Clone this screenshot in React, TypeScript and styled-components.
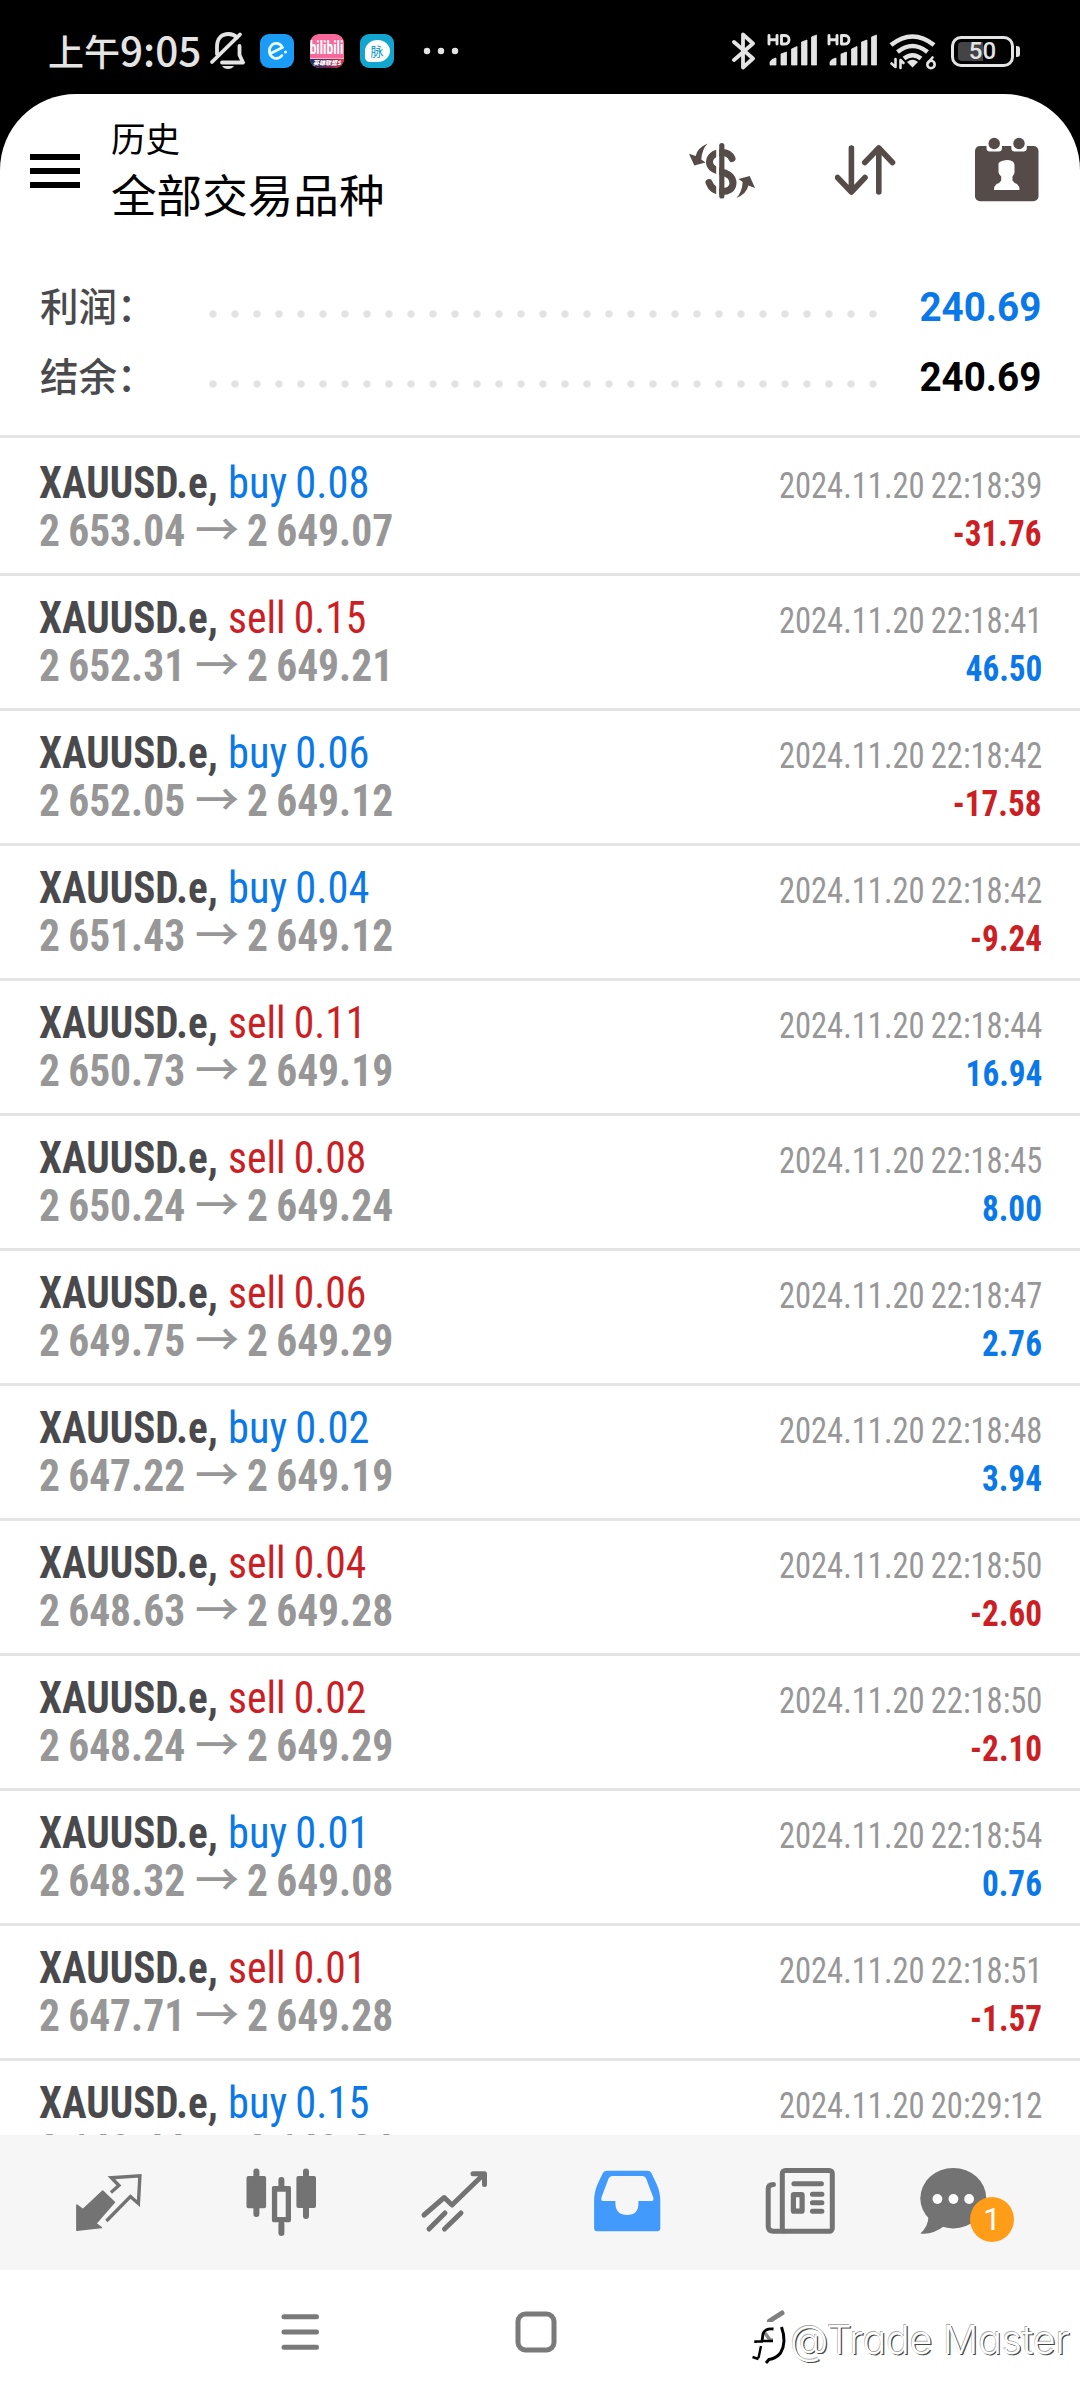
import React from "react";
import styled, { createGlobalStyle } from "styled-components";

const BLUE = "#0a78e8";
const RED = "#cc1f25";
const CJK = `"Noto Sans CJK SC", sans-serif`;
const LATIN = `Roboto, "Noto Sans CJK SC", sans-serif`;

const GlobalStyle = createGlobalStyle`
  html, body { margin: 0; padding: 0; background: #000; }
  * { box-sizing: border-box; }
  svg { display: block; flex: none; }
`;

const Screen = styled.div`
  position: relative;
  display: flex;
  flex-direction: column;
  width: 1080px;
  height: 2400px;
  overflow: hidden;
  background: #000;
  font-family: ${LATIN};
`;

/* ---------- status bar ---------- */

const StatusBar = styled.header`
  display: flex;
  align-items: center;
  height: 94px;
  padding: 8px 60px 0 48px;
  color: #e4e4e4;
`;

const Clock = styled.div`
  display: flex;
  align-items: baseline;
  width: 161px;
  margin-top: -4px;
  font: 500 36px/60px ${CJK};
  white-space: nowrap;
`;

const Digits = styled.span`
  font-size: 40.5px;
`;

const AppBadges = styled.div`
  display: flex;
  gap: 16px;
  margin-left: 15px;
`;

const AppBadge = styled.div<{ $bg: string }>`
  display: flex;
  flex-direction: column;
  align-items: center;
  justify-content: center;
  width: 34px;
  height: 34px;
  border-radius: 9px;
  overflow: hidden;
  background: ${(p) => p.$bg};
`;

const BiliText = styled.div`
  height: 24px;
  color: #fff;
  font: 700 18px/27px Roboto, sans-serif;
  font-stretch: 75%;
  transform: scaleX(0.75);
`;

const BiliStrip = styled.div`
  width: 34px;
  height: 10px;
  border-top: 1px solid #f7b5c8;
  background: linear-gradient(90deg, #1b2e66, #7d2450 60%, #d8324a);
  color: #fff;
  font: italic 900 6px/8px ${CJK};
  text-align: center;
  white-space: nowrap;
`;

const MaiBubble = styled.div`
  display: flex;
  align-items: center;
  justify-content: center;
  width: 25px;
  height: 22px;
  border-radius: 50% 50% 50% 20%;
  background: #fff;
  color: #159cc4;
  font: 400 13px/20px ${CJK};
`;

const MoreDots = styled.svg`
  margin-left: 29px;
`;

const StatusRight = styled.div`
  display: flex;
  align-items: center;
  margin-left: auto;
`;

const Signals = styled.div`
  display: flex;
  gap: 10px;
  margin: 0 12px 0 11px;
`;

/* ---------- app page ---------- */

const Page = styled.main`
  display: flex;
  flex-direction: column;
  height: 2306px;
  border-radius: 76px 76px 0 0;
  overflow: hidden;
  background: #fff;
`;

const TopBar = styled.div`
  display: flex;
  align-items: center;
  height: 154px;
  padding: 0 41px 0 30px;
`;

const Hamburger = styled.div`
  display: flex;
  flex-direction: column;
  gap: 8px;
  width: 50px;
  height: 34px;
  i { height: 6px; background: #000; }
`;

const Titles = styled.div`
  display: flex;
  flex-direction: column;
  margin: -6px auto 0 31px;
  color: #000;
  font-family: ${CJK};
`;

const Caption = styled.div`
  font-size: 34.5px;
  line-height: 50px;
`;

const Title = styled.div`
  font-size: 45.6px;
  line-height: 62px;
`;

const Actions = styled.div`
  display: flex;
  align-items: center;
  gap: 78px;
  padding-bottom: 3px;
  color: #554b48;
`;

const Summary = styled.section`
  height: 190px;
  margin-bottom: 3px;
  padding: 22px 39px 0 40px;
  border-bottom: 3px solid #e4e4e4;
`;

const SummaryRow = styled.div`
  display: flex;
  align-items: center;
  height: 70px;
`;

const SummaryLabel = styled.div`
  width: 163px;
  margin-top: -2px;
  color: #4a4a4d;
  font: 500 38.5px/70px ${CJK};
  white-space: nowrap;
`;

const Leader = styled.div`
  width: 682px;
  height: 8px;
  margin-top: 18px;
  background: radial-gradient(circle, #e2e2e2 3.2px, transparent 4.2px) -1px 0 / 22px 8px repeat-x;
`;

const SummaryValue = styled.div<{ $color: string }>`
  margin: 5px 0 0 auto;
  color: ${(p) => p.$color};
  font-size: 40px;
  font-weight: 700;
  transform: scaleX(0.965);
  transform-origin: right;
`;

const List = styled.section`
  height: 1694px;
  overflow: hidden;
`;

const Row = styled.div`
  height: 135px;
  padding: 19px 38px 0 39px;
  border-bottom: 3px solid #e4e4e4;
`;

const Line = styled.div`
  display: flex;
  align-items: baseline;
  height: 47px;
  line-height: 48px;
  white-space: nowrap;
`;

const Condensed = styled.span<{
  $size: number;
  $color: string;
  $scale: number;
  $bold?: boolean;
  $width?: number;
}>`
  display: block;
  width: ${(p) => (p.$width ? `${p.$width}px` : "auto")};
  margin-left: ${(p) => (p.$width ? "0" : "auto")};
  color: ${(p) => p.$color};
  font-size: ${(p) => p.$size}px;
  font-weight: ${(p) => (p.$bold ? 700 : 400)};
  font-stretch: 75%;
  word-spacing: -1.5px;
  transform: scaleX(${(p) => p.$scale});
  transform-origin: ${(p) => (p.$width ? "left" : "right")};
`;

const Arrow = styled.span`
  width: 52px;
  color: #979797;
  font: 500 44px/40px ${CJK};
`;

/* ---------- bottom bars ---------- */

const TabBar = styled.nav`
  display: grid;
  grid-template-columns: repeat(6, 173.2px);
  height: 135px;
  padding-left: 21px;
  background: #f6f6f6;
  color: #737373;
`;

const Tab = styled.div<{ $active?: boolean }>`
  position: relative;
  display: flex;
  align-items: center;
  justify-content: center;
  color: ${(p) => (p.$active ? "#429bfc" : "inherit")};
`;

const Count = styled.span`
  position: absolute;
  left: 83px;
  top: 62px;
  width: 44px;
  height: 45px;
  border-radius: 50%;
  background: #ff9c18;
  color: #fff;
  font-size: 32px;
  line-height: 45px;
  text-align: center;
`;

const SystemBar = styled.nav`
  display: grid;
  grid-template-columns: repeat(3, 235.7px);
  align-items: center;
  justify-items: center;
  height: 130px;
  padding: 0 0 6px 182px;
  color: #7a7a7a;
`;

const Watermark = styled.div`
  position: absolute;
  left: 750px;
  top: 2308px;
  display: flex;
  align-items: center;
  height: 64px;
  color: #fff;
  white-space: nowrap;
`;

const WatermarkText = styled.span`
  font: 300 39.5px/60px Inter, sans-serif;
  font-feature-settings: "cv11";
  letter-spacing: -0.3px;
  text-shadow: 1.2px 1.2px 0.5px #444, -0.6px -0.6px 0.5px #aaa;
`;

/* ---------- icons ---------- */

const stroke = (width: number) => ({
  fill: "none",
  stroke: "currentColor",
  strokeWidth: width,
  strokeLinecap: "round" as const,
  strokeLinejoin: "round" as const,
});

const Muted = () => (
  <svg width="36" height="40" viewBox="209 32 36 40">
    <g {...stroke(3.8)}>
      <path d="M217 55V48C217 39 222 35 228.500 35C232 35 235 36.500 237 38.500" />
      <path d="M239.500 47V56L243 63.500H222" />
      <path d="M212 63L240 35.500" />
    </g>
    <path d="M222 67H234Q232 70 228 70T222 67Z" fill="currentColor" />
  </svg>
);

const SignalBars = () => (
  <svg width="50" height="36" viewBox="0 0 50 36">
    <g {...stroke(2.9)}>
      <path d="M2 2.500V11M10 2.500V11M2 6.700H10" />
      <path d="M14.500 2.500V11H17Q22 11 22 6.700T17 2.500Z" />
    </g>
    <path
      d="M3 32V29Q4 26 9 25V32ZM14 32V21L19.500 19V32ZM24.500 32V16L30 13.500V32ZM34.500 32V9L40 7V32ZM44.500 32V4L49.500 2V32Z"
      fill="currentColor"
      stroke="currentColor"
      strokeWidth="0.8"
      strokeLinejoin="round"
    />
  </svg>
);

const Bluetooth = () => (
  <svg width="24" height="40" viewBox="732 31 24 40">
    <path {...stroke(3.8)} d="M734 42L753 58.500L743 67.500V34.500L753 43.500L734 60" />
  </svg>
);

const Wifi = () => (
  <svg width="48" height="38" viewBox="889 33 48 38">
    <g {...stroke(4.6)} strokeLinecap="butt">
      <path d="M891 46Q912.500 29 934 46" />
      <path d="M897.500 53Q912.500 41 927.500 53" />
      <path d="M904 59.500Q912.500 53 921 59.500" />
    </g>
    <path d="M907 63Q912.500 58.500 918 63L912.500 68.500Z" fill="currentColor" />
    <g {...stroke(2.6)}>
      <path d="M895.500 60V68L891.500 64.500M900.500 69V61L903.500 64" />
      <path d="M932.500 58.500L928 64" />
      <circle cx="931" cy="65.500" r="3.700" />
    </g>
  </svg>
);

const BatteryBox = styled.div`
  display: flex;
  align-items: center;
  gap: 2px;
  margin-left: 14px;
`;

const BatteryBody = styled.div`
  width: 63px;
  height: 31px;
  padding: 3px 4px;
  border: 3.5px solid #e4e4e4;
  border-radius: 10px;
`;

const BatteryFill = styled.div`
  width: 100%;
  height: 100%;
  border-radius: 4px;
  background: linear-gradient(90deg, #444 50%, transparent 50%);
  font: 500 24px/19px Roboto, sans-serif;
  text-align: center;
`;

const BatteryTip = styled.div`
  width: 4px;
  height: 11px;
  border-radius: 0 3px 3px 0;
  background: #e4e4e4;
`;

const SWING =
  "M707.700 143.500Q697 148 695.700 156L689 153.700L694.300 165.500L705.500 162.500L701.300 159.500Q702 149 707.700 143.500Z";

const Currency = () => (
  <svg width="70" height="60" viewBox="687 140 70 60">
    <path
      {...stroke(7)}
      d="M732 158.500C730 154 726 152.500 722 152.500C714 152.500 709.500 157 709.500 162C709.500 168 715 170 722 172C729 174 733 177 733 183C733 189 728 191.500 722 191.500C715 191.500 711 188 709 182.500"
    />
    <path d="M717.700 142V200" stroke="#fff" strokeWidth="3" />
    <path {...stroke(5.200)} d="M721.800 145.500V196" />
    <path d={SWING} fill="currentColor" />
    <path d={SWING} fill="currentColor" transform="rotate(180 722 170.800)" />
  </svg>
);

const Sort = () => (
  <svg width="62" height="56" viewBox="835 143 62 56">
    <path
      {...stroke(5.600)}
      d="M851.400 149V193M837.500 178.500L851.400 193L865 178.500M878.800 193V149M864.800 163.500L878.800 149L892.500 163.500"
    />
  </svg>
);

const CalendarUser = () => (
  <svg width="64" height="66" viewBox="975 137 64 66">
    <rect x="975" y="146" width="63.500" height="55.300" rx="5" fill="currentColor" />
    <path d="M986.500 140H1002V148Q1002 151.500 998.500 151.500H990Q986.500 151.500 986.500 148ZM1011.300 140H1026.800V148Q1026.800 151.500 1023.300 151.500H1014.800Q1011.300 151.500 1011.300 148Z" fill="#fff" />
    <circle cx="994.200" cy="143.500" r="5.700" fill="currentColor" />
    <circle cx="1019" cy="143.500" r="5.700" fill="currentColor" />
    <path
      d="M998.500 163Q1001 160.500 1006.500 160Q1014 160 1014.500 165V171Q1015 174 1012.500 176.500V180.500Q1014 183 1017 184Q1019.500 186 1019.500 190H994Q994 186 996.500 184Q1000 183 1001.200 180.500V176.500Q998 174 998.500 171Z"
      fill="#fff"
    />
  </svg>
);

const TabIcon = ({ cx, children }: { cx: number; children: React.ReactNode }) => (
  <svg width="110" height="85" viewBox={`${cx - 55} 2160 110 85`}>
    {children}
  </svg>
);

const QuotesIcon = () => (
  <TabIcon cx={107.6}>
    <path
      d="M76.500 2205L82.600 2209.500L102.300 2191L114 2202.300L95.500 2223.500L101 2227.500L76.500 2230.300Z"
      fill="currentColor"
      stroke="currentColor"
      strokeWidth="1.500"
      strokeLinejoin="round"
    />
    <path
      {...stroke(3.400)}
      strokeLinecap="butt"
      strokeLinejoin="miter"
      d="M110.500 2192.500L118.500 2185.500L111 2177.800L139.500 2175.800L138 2203.500L130 2196.500L106 2221"
    />
  </TabIcon>
);

const CandlesIcon = () => (
  <TabIcon cx={280.8}>
    <g fill="currentColor">
      <rect x="246.300" y="2176" width="19.600" height="32.300" rx="2" />
      <rect x="296.200" y="2176" width="19.600" height="32" rx="2" />
      <path fillRule="evenodd" d="M273.500 2186H289Q290.800 2186 290.800 2188V2220.300Q290.800 2222.300 289 2222.300H273.500Q271.700 2222.300 271.700 2220.300V2188Q271.700 2186 273.500 2186ZM277 2191.700V2217H285.500V2191.700Z" />
    </g>
    <path {...stroke(6)} d="M256.200 2171.500V2214M305.800 2171.500V2216M281.200 2180V2186M281.200 2224V2233" />
  </TabIcon>
);

const ChartIcon = () => (
  <TabIcon cx={454}>
    <path
      {...stroke(5)}
      d="M424 2215L444.200 2197.500L452 2205L484 2174M473 2173.800H484.500V2184.500M445 2213L429 2229M461 2213L444.500 2229"
    />
  </TabIcon>
);

const InboxIcon = () => (
  <TabIcon cx={627.4}>
    <path
      fillRule="evenodd"
      fill="currentColor"
      d="M607.500 2170.700H647.500Q650.500 2170.700 651.800 2173L657 2184Q660.700 2192 660.700 2201V2228Q660.700 2231.300 657.500 2231.300H597.500Q594.500 2231.300 594.500 2228V2201Q594.500 2192 598 2184L603.300 2173Q604.500 2170.700 607.500 2170.700ZM612.500 2176Q610 2176 609 2178.500L602 2197Q600.800 2201 603.500 2201H615.800V2204Q616.500 2215 627.500 2215Q638.500 2215 638.800 2204V2201H652Q654.800 2201 653.500 2197L646.500 2178.500Q645.500 2176 643 2176Z"
    />
  </TabIcon>
);

const NewsIcon = () => (
  <TabIcon cx={800.6}>
    <rect {...stroke(5)} x="782.900" y="2170.500" width="50" height="60.800" rx="3" />
    <path {...stroke(5)} d="M774 2184.500Q768.800 2184.500 768.800 2189V2226Q768.800 2231.300 774 2231.300H784" />
    <path {...stroke(5)} d="M794.500 2183.700H822M813 2194.300H822.500M813 2202.800H822.500M813 2211.200H822.500" />
    <rect {...stroke(5.200)} x="794" y="2194.600" width="8.700" height="16.600" rx="0.500" />
  </TabIcon>
);

const ChatIcon = () => (
  <TabIcon cx={973.6}>
    <g fill="currentColor">
      <ellipse cx="952.900" cy="2198.200" rx="33" ry="30.200" />
      <path d="M928 2217Q928 2226 920 2233.500Q932 2235 944 2226L950 2215Z" />
    </g>
    <g fill="#fff">
      <circle cx="937" cy="2199" r="4.900" />
      <circle cx="953" cy="2199" r="4.900" />
      <circle cx="968.700" cy="2199" r="4.900" />
    </g>
  </TabIcon>
);

const WatermarkMark = () => (
  <svg width="40" height="64" viewBox="750 2308 40 64">
    <path d="M769.500 2321L782 2313" stroke="#808080" strokeWidth="5" strokeLinecap="round" />
    <path d="M762 2322H784L780 2326H762Z" fill="#fff" />
    <path d="M765 2333L770 2340H773" fill="none" stroke="#8b8b8b" strokeWidth="3.500" />
    <g fill="none" stroke="#000">
      <path d="M773.500 2329Q765 2328 763 2334L762 2341" strokeWidth="2.800" />
      <path d="M755.500 2343V2341.500H763M762.500 2341H773" strokeWidth="2.400" />
      <path d="M761 2346L758.500 2358M752.500 2357L758.500 2359" strokeWidth="2.400" />
      <path d="M781.500 2327Q787 2342 780.500 2353Q776 2358.500 769 2359.500L766 2363" strokeWidth="3" />
    </g>
  </svg>
);

/* ---------- data ---------- */

type Deal = {
  side: "buy" | "sell";
  lots: string;
  open: string;
  close: string;
  time: string;
  profit: string;
};

const deal = (
  side: Deal["side"],
  lots: string,
  open: string,
  close: string,
  time: string,
  profit: string
): Deal => ({ side, lots, open, close, time: `2024.11.20 ${time}`, profit });

const deals: Deal[] = [
  deal("buy", "0.08", "2 653.04", "2 649.07", "22:18:39", "-31.76"),
  deal("sell", "0.15", "2 652.31", "2 649.21", "22:18:41", "46.50"),
  deal("buy", "0.06", "2 652.05", "2 649.12", "22:18:42", "-17.58"),
  deal("buy", "0.04", "2 651.43", "2 649.12", "22:18:42", "-9.24"),
  deal("sell", "0.11", "2 650.73", "2 649.19", "22:18:44", "16.94"),
  deal("sell", "0.08", "2 650.24", "2 649.24", "22:18:45", "8.00"),
  deal("sell", "0.06", "2 649.75", "2 649.29", "22:18:47", "2.76"),
  deal("buy", "0.02", "2 647.22", "2 649.19", "22:18:48", "3.94"),
  deal("sell", "0.04", "2 648.63", "2 649.28", "22:18:50", "-2.60"),
  deal("sell", "0.02", "2 648.24", "2 649.29", "22:18:50", "-2.10"),
  deal("buy", "0.01", "2 648.32", "2 649.08", "22:18:54", "0.76"),
  deal("sell", "0.01", "2 647.71", "2 649.28", "22:18:51", "-1.57"),
  deal("buy", "0.15", "2 648.44", "2 648.24", "20:29:12", ""),
];

const DealRow = ({ d }: { d: Deal }) => (
  <Row>
    <Line>
      <Condensed $size={43.5} $color="#4a4a4d" $scale={0.945} $width={189} $bold>
        XAUUSD.e,
      </Condensed>
      <Condensed
        $size={43.5}
        $color={d.side === "buy" ? BLUE : RED}
        $scale={d.side === "buy" ? 0.975 : 0.957}
        $width={160}
      >
        {d.side} {d.lots}
      </Condensed>
      <Condensed $size={36.5} $color="#979797" $scale={0.892}>
        {d.time}
      </Condensed>
    </Line>
    <Line>
      <Condensed $size={43.5} $color="#979797" $scale={0.955} $width={156} $bold>
        {d.open}
      </Condensed>
      <Arrow>→</Arrow>
      <Condensed $size={43.5} $color="#979797" $scale={0.955} $width={155} $bold>
        {d.close}
      </Condensed>
      <Condensed $size={36.5} $color={d.profit.startsWith("-") ? RED : BLUE} $scale={0.91} $bold>
        {d.profit}
      </Condensed>
    </Line>
  </Row>
);

export default function App() {
  return (
    <Screen>
      <GlobalStyle />
      <StatusBar>
        <Clock>
          上午<Digits>9:05</Digits>
        </Clock>
        <Muted />
        <AppBadges>
          <AppBadge $bg="#1a9bf5">
            <svg width="24" height="24" viewBox="0 0 24 24">
              <path
                d="M5.500 14.500L17.500 8.500C15 3.500 9 3 6 7C3 11 4 17 9 19C12 20 15 19 17 16.500"
                fill="none"
                stroke="#e8ffff"
                strokeWidth="2.700"
                strokeLinecap="round"
              />
              <circle cx="20.500" cy="13" r="1.500" fill="#e8ffff" />
            </svg>
          </AppBadge>
          <AppBadge $bg="#f8689a">
            <BiliText>bilibili</BiliText>
            <BiliStrip>英雄联盟S</BiliStrip>
          </AppBadge>
          <AppBadge $bg="#12a5cf">
            <MaiBubble>脉</MaiBubble>
          </AppBadge>
        </AppBadges>
        <MoreDots width="36" height="8" viewBox="0 0 36 8">
          <circle cx="4" cy="4" r="3.200" fill="currentColor" />
          <circle cx="18" cy="4" r="3.200" fill="currentColor" />
          <circle cx="32" cy="4" r="3.200" fill="currentColor" />
        </MoreDots>
        <StatusRight>
          <Bluetooth />
          <Signals>
            <SignalBars />
            <SignalBars />
          </Signals>
          <Wifi />
          <BatteryBox>
            <BatteryBody>
              <BatteryFill>50</BatteryFill>
            </BatteryBody>
            <BatteryTip />
          </BatteryBox>
        </StatusRight>
      </StatusBar>

      <Page>
        <TopBar>
          <Hamburger>
            <i />
            <i />
            <i />
          </Hamburger>
          <Titles>
            <Caption>历史</Caption>
            <Title>全部交易品种</Title>
          </Titles>
          <Actions>
            <Currency />
            <Sort />
            <CalendarUser />
          </Actions>
        </TopBar>

        <Summary>
          <SummaryRow>
            <SummaryLabel>利润：</SummaryLabel>
            <Leader />
            <SummaryValue $color={BLUE}>240.69</SummaryValue>
          </SummaryRow>
          <SummaryRow>
            <SummaryLabel>结余：</SummaryLabel>
            <Leader />
            <SummaryValue $color="#000">240.69</SummaryValue>
          </SummaryRow>
        </Summary>

        <List>
          {deals.map((d) => (
            <DealRow key={d.time + d.open} d={d} />
          ))}
        </List>

        <TabBar>
          <Tab><QuotesIcon /></Tab>
          <Tab><CandlesIcon /></Tab>
          <Tab><ChartIcon /></Tab>
          <Tab $active><InboxIcon /></Tab>
          <Tab><NewsIcon /></Tab>
          <Tab>
            <ChatIcon />
            <Count>1</Count>
          </Tab>
        </TabBar>

        <SystemBar>
          <svg width="44" height="44" viewBox="278 2310 44 44">
            <path {...stroke(5)} d="M284 2316.700H316.500M284 2332H316.500M284 2347.300H316.500" />
          </svg>
          <svg width="44" height="44" viewBox="0 0 44 44">
            <rect {...stroke(5)} x="4" y="4" width="36" height="36" rx="7.500" />
          </svg>
        </SystemBar>
      </Page>

      <Watermark>
        <WatermarkMark />
        <WatermarkText>@Trade Master</WatermarkText>
      </Watermark>
    </Screen>
  );
}
